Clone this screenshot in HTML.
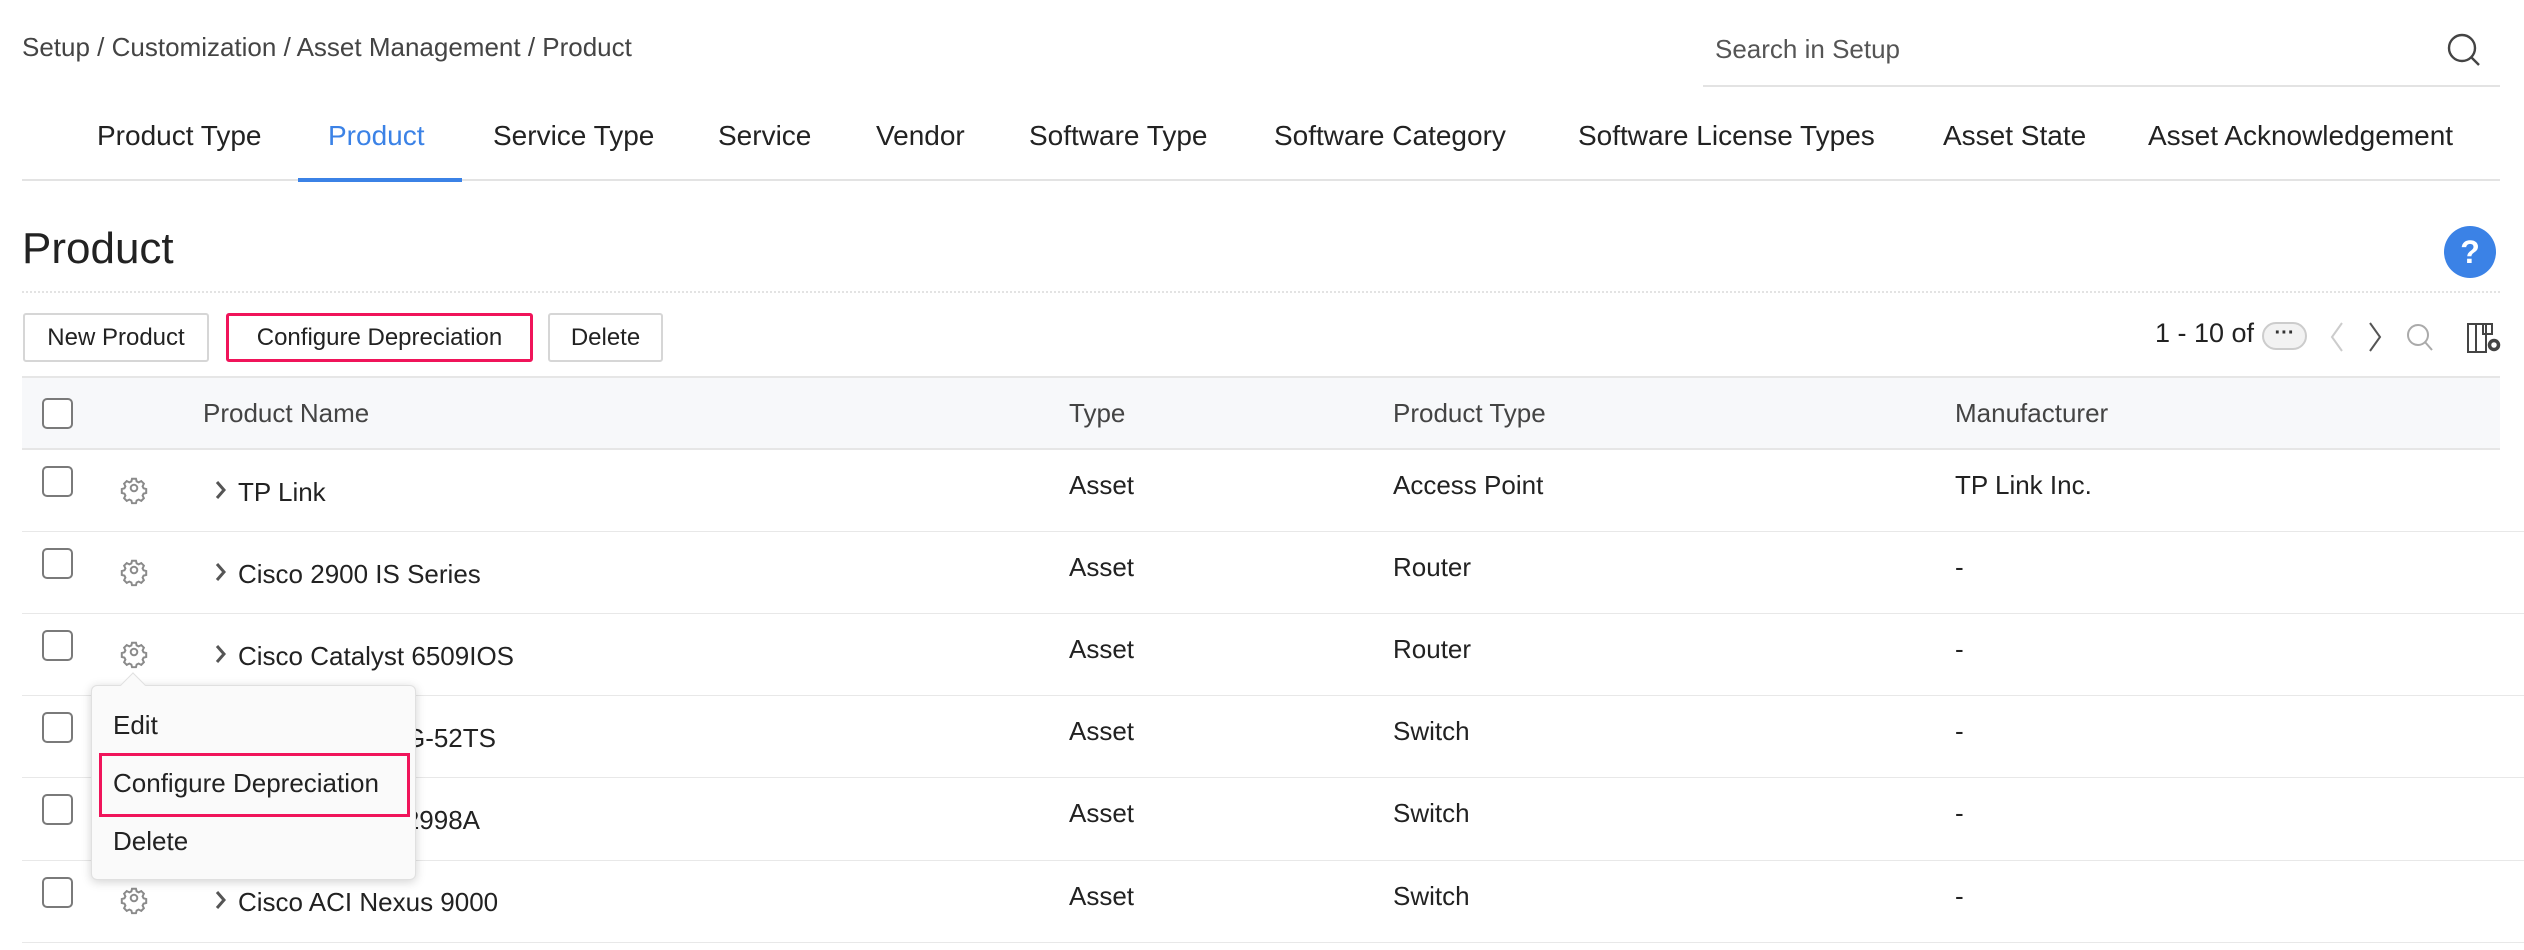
<!DOCTYPE html>
<html><head><meta charset="utf-8"><style>
*{margin:0;padding:0;box-sizing:border-box}
body{width:2524px;height:950px;background:#fff;font-family:"Liberation Sans",sans-serif;color:#333;position:relative;overflow:hidden}
.a{position:absolute;white-space:nowrap}
.bc{left:22px;top:32px;font-size:26px;color:#444}
.tab{top:120px;font-size:28px;color:#222}
.cb{position:absolute;left:42px;width:31px;height:31px;border:2px solid #7a7a7a;border-radius:5px;background:#fff}
.row{position:absolute;left:22px;right:0;height:1px;background:#e8e8e8}
.cell{position:absolute;font-size:26px;color:#222;white-space:nowrap}
.btn{position:absolute;top:313px;height:49px;border:2px solid #d6d6d6;border-radius:3px;font-size:24px;line-height:45px;text-align:center;color:#222;background:#fff}
</style></head><body>
<div class="a bc">Setup / Customization / Asset Management / Product</div>
<div class="a" style="left:1715px;top:34px;font-size:26px;color:#555">Search in Setup</div>
<div class="a" style="left:1703px;top:85px;width:797px;height:2px;background:#e3e3e3"></div>
<svg class="a" style="left:2446px;top:32px" width="36" height="36" viewBox="0 0 36 36"><circle cx="16" cy="16" r="13" fill="none" stroke="#444" stroke-width="2.4"/><path d="M25 25l8 8" stroke="#444" stroke-width="2.4"/></svg>

<div class="a tab" style="left:97px">Product Type</div>
<div class="a tab" style="left:328px;color:#3b82e6">Product</div>
<div class="a tab" style="left:493px">Service Type</div>
<div class="a tab" style="left:718px">Service</div>
<div class="a tab" style="left:876px">Vendor</div>
<div class="a tab" style="left:1029px">Software Type</div>
<div class="a tab" style="left:1274px">Software Category</div>
<div class="a tab" style="left:1578px">Software License Types</div>
<div class="a tab" style="left:1943px">Asset State</div>
<div class="a tab" style="left:2148px">Asset Acknowledgement</div>
<div class="a" style="left:22px;top:179px;width:2478px;height:2px;background:#e3e3e3"></div>
<div class="a" style="left:298px;top:178px;width:164px;height:4px;background:#3b82e6"></div>

<div class="a" style="left:22px;top:224px;font-size:44px;color:#222">Product</div>
<div class="a" style="left:2444px;top:226px;width:52px;height:52px;border-radius:50%;background:#3b82e6;color:#fff;font-weight:bold;font-size:32px;text-align:center;line-height:52px">?</div>
<div class="a" style="left:22px;top:291px;width:2478px;border-top:2px dotted #e3e3e3"></div>

<div class="btn" style="left:23px;width:186px">New Product</div>
<div class="btn" style="left:226px;width:307px;border:3px solid #f0145a;line-height:43px">Configure Depreciation</div>
<div class="btn" style="left:548px;width:115px">Delete</div>

<div class="a" style="left:2155px;top:318px;font-size:27px;color:#222">1 - 10 of</div>
<div class="a" style="left:2262px;top:322px;width:45px;height:28px;border:2px solid #ccc;border-radius:14px;background:#f2f2f2;font-size:20px;font-weight:bold;text-align:center;line-height:18px">···</div>
<svg class="a" style="left:2326px;top:320px" width="110" height="34" viewBox="0 0 110 34"><path d="M16 3L6 17l10 14" fill="none" stroke="#ccc" stroke-width="2"/><path d="M44 3l10 14-10 14" fill="none" stroke="#555" stroke-width="2"/><circle cx="92" cy="15" r="10" fill="none" stroke="#aaa" stroke-width="2"/><path d="M99 22l7 8" stroke="#aaa" stroke-width="2"/></svg>
<svg class="a" style="left:2466px;top:322px" width="36" height="32" viewBox="0 0 36 32"><path d="M2 2h18v28H2zM10 2v28M17 2v10h9V2z" fill="none" stroke="#444" stroke-width="2"/><circle cx="28" cy="23" r="4.5" fill="none" stroke="#444" stroke-width="3.5"/></svg>

<div class="a" style="left:22px;top:376px;width:2478px;height:74px;background:#f7f8fa;border-top:2px solid #e6e6e6;border-bottom:2px solid #e6e6e6"></div>
<div class="cb" style="top:398px"></div>
<div class="cell" style="left:203px;top:398px;color:#444">Product Name</div>
<div class="cell" style="left:1069px;top:398px;color:#444">Type</div>
<div class="cell" style="left:1393px;top:398px;color:#444">Product Type</div>
<div class="cell" style="left:1955px;top:398px;color:#444">Manufacturer</div>

<div class="cb" style="top:466px"></div><div class="cell" style="left:238px;top:477px">TP Link</div><div class="cell" style="left:1069px;top:470px">Asset</div><div class="cell" style="left:1393px;top:470px">Access Point</div><div class="cell" style="left:1955px;top:470px">TP Link Inc.</div><div class="row" style="top:531px"></div>
<div class="cb" style="top:548px"></div><div class="cell" style="left:238px;top:559px">Cisco 2900 IS Series</div><div class="cell" style="left:1069px;top:552px">Asset</div><div class="cell" style="left:1393px;top:552px">Router</div><div class="cell" style="left:1955px;top:552px">-</div><div class="row" style="top:613px"></div>
<div class="cb" style="top:630px"></div><div class="cell" style="left:238px;top:641px">Cisco Catalyst 6509IOS</div><div class="cell" style="left:1069px;top:634px">Asset</div><div class="cell" style="left:1393px;top:634px">Router</div><div class="cell" style="left:1955px;top:634px">-</div><div class="row" style="top:695px"></div>
<div class="cb" style="top:712px"></div><div class="cell" style="right:2028px;top:723px">Cisco SG300 SG-52TS</div><div class="cell" style="left:1069px;top:716px">Asset</div><div class="cell" style="left:1393px;top:716px">Switch</div><div class="cell" style="left:1955px;top:716px">-</div><div class="row" style="top:777px"></div>
<div class="cb" style="top:794px"></div><div class="cell" style="right:2044px;top:805px">Cisco WS-C2998A</div><div class="cell" style="left:1069px;top:798px">Asset</div><div class="cell" style="left:1393px;top:798px">Switch</div><div class="cell" style="left:1955px;top:798px">-</div><div class="row" style="top:860px"></div>
<div class="cb" style="top:877px"></div><div class="cell" style="left:238px;top:887px">Cisco ACI Nexus 9000</div><div class="cell" style="left:1069px;top:881px">Asset</div><div class="cell" style="left:1393px;top:881px">Switch</div><div class="cell" style="left:1955px;top:881px">-</div><div class="row" style="top:942px"></div>

<svg class="a" style="left:0;top:0;pointer-events:none" width="400" height="950">
<defs><g id="g" transform="scale(0.66)"><path d="M-3-14h6l1 4 3 1.5 4-2 4 4-2 4 1.5 3 4 1v6l-4 1-1.5 3 2 4-4 4-4-2-3 1.5-1 4h-6l-1-4-3-1.5-4 2-4-4 2-4-1.5-3-4-1v-6l4-1 1.5-3-2-4 4-4 4 2 3-1.5z" fill="none" stroke="#8a8a8a" stroke-width="3"/><circle r="5" fill="none" stroke="#8a8a8a" stroke-width="3"/></g>
<path id="c" d="M0 0l7 8-7 8" fill="none" stroke="#555" stroke-width="3"/></defs>
<use href="#g" x="134" y="488"/><use href="#g" x="134" y="570"/><use href="#g" x="134" y="652"/><use href="#g" x="134" y="898"/>
<use href="#c" x="217" y="482"/><use href="#c" x="217" y="564"/><use href="#c" x="217" y="646"/><use href="#c" x="217" y="728"/><use href="#c" x="217" y="810"/><use href="#c" x="217" y="892"/>
</svg>

<div class="a" style="left:91px;top:685px;width:325px;height:195px;background:#fafafa;border:1px solid #e0e0e0;border-radius:6px;box-shadow:0 2px 10px rgba(0,0,0,.18)"></div>
<div class="a" style="left:124px;top:676px;width:18px;height:18px;background:#fafafa;border-left:1px solid #e0e0e0;border-top:1px solid #e0e0e0;transform:rotate(45deg)"></div>
<div class="a" style="left:113px;top:710px;font-size:26px;color:#222">Edit</div>
<div class="a" style="left:99px;top:753px;width:311px;height:64px;border:3px solid #f0145a"></div>
<div class="a" style="left:113px;top:768px;font-size:26px;color:#222">Configure Depreciation</div>
<div class="a" style="left:113px;top:826px;font-size:26px;color:#222">Delete</div>
</body></html>
